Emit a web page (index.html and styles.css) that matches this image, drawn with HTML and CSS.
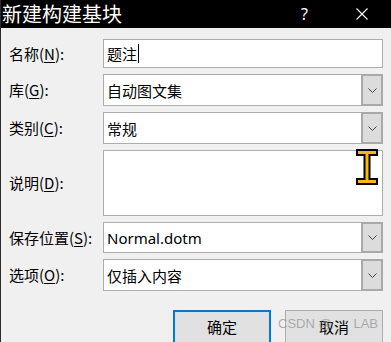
FILE: index.html
```html
<!DOCTYPE html>
<html lang="zh-CN">
<head>
    <meta charset="UTF-8">
    <title>新建构建基块</title>
    <link rel="stylesheet" href="styles.css">
</head>
<body>
    <div class="titlebar">
        <span class="title">新建构建基块</span>
        <span class="help">?</span>
        <svg class="close" width="12" height="12" viewBox="0 0 12 12"><path d="M0.5 0.5L11.5 11.5M11.5 0.5L0.5 11.5" stroke="#fff" stroke-width="1.1"/></svg>
    </div>
    <div class="form">
        <label class="label">名称(<u>N</u>):</label>
        <div class="field">题注<span class="caret"></span></div>

        <label class="label">库(<u>G</u>):</label>
        <div class="field combo"><span class="value">自动图文集</span><span class="drop"><svg width="9" height="5" viewBox="0 0 9 5"><path d="M0.5 0.5L4.5 4.5L8.5 0.5" fill="none" stroke="#444" stroke-width="1"/></svg></span></div>

        <label class="label">类别(<u>C</u>):</label>
        <div class="field combo"><span class="value">常规</span><span class="drop"><svg width="9" height="5" viewBox="0 0 9 5"><path d="M0.5 0.5L4.5 4.5L8.5 0.5" fill="none" stroke="#444" stroke-width="1"/></svg></span></div>

        <label class="label">说明(<u>D</u>):</label>
        <div class="field area"></div>

        <label class="label">保存位置(<u>S</u>):</label>
        <div class="field combo"><span class="value latin">Normal.dotm</span><span class="drop"><svg width="9" height="5" viewBox="0 0 9 5"><path d="M0.5 0.5L4.5 4.5L8.5 0.5" fill="none" stroke="#444" stroke-width="1"/></svg></span></div>

        <label class="label">选项(<u>O</u>):</label>
        <div class="field combo"><span class="value">仅插入内容</span><span class="drop"><svg width="9" height="5" viewBox="0 0 9 5"><path d="M0.5 0.5L4.5 4.5L8.5 0.5" fill="none" stroke="#444" stroke-width="1"/></svg></span></div>
    </div>
    <div class="buttons">
        <button class="btn primary">确定</button>
        <button class="btn">取消</button>
    </div>
    <div class="watermark"><span>CSDN @</span><span>LAB</span></div>
    <svg class="ibeam" width="22" height="36" viewBox="0 0 22 36">
        <path d="M1 1H21V6H13.5V30H21V35H1V30H8.5V6H1Z" fill="#ffb900" stroke="#000" stroke-width="2"/>
    </svg>
</body>
</html>
```

FILE: styles.css
```css
*{
    margin: 0;
    padding: 0;
    box-sizing: border-box;
}
body{
    width: 391px;
    height: 342px;
    overflow: hidden;
    position: relative;
    background-color: #f0f0f0;
    border-left: 1px solid #2b2b2b;
    font-family: "Noto Sans CJK SC", "Noto Sans", sans-serif;
    font-size: 15px;
    color: #000;
}
.titlebar{
    height: 28px;
    background-color: #000;
    color: #fff;
    display: flex;
    align-items: center;
}
.title{
    font-size: 20px;
    line-height: 28px;
    padding-left: 1px;
}
.help{
    margin-left: auto;
    font-family: "Noto Sans", sans-serif;
    font-size: 16px;
    line-height: 28px;
}
.close{
    margin-left: 48px;
    margin-right: 23px;
}
.form{
    display: grid;
    grid-template-columns: 94px 280px;
    grid-template-rows: 29px 32px 32px 66px 31px 32px;
    row-gap: 6px;
    align-items: center;
    padding: 11px 0 0 8px;
}
.label{
    font-size: 15px;
    line-height: 20px;
}
.label u{
    text-underline-offset: 2px;
}
.field{
    height: 100%;
    background-color: #fff;
    border: 1px solid #adadad;
    display: flex;
    align-items: center;
    padding-left: 3px;
    font-size: 15px;
}
.caret{
    width: 1px;
    height: 19px;
    background-color: #000;
    margin-left: 1px;
}
.combo{
    padding-right: 0;
}
.value{
    flex: 1;
}
.latin{
    font-family: "Noto Sans", sans-serif;
    font-size: 15px;
}
.drop{
    width: 22px;
    height: calc(100% + 2px);
    margin-right: -1px;
    background-color: #dcdcdc;
    border: 2px solid #a9a9a9;
    display: flex;
    align-items: center;
    justify-content: center;
}
.buttons{
    display: flex;
    justify-content: flex-end;
    gap: 14px;
    padding: 19px 8px 0 0;
}
.btn{
    width: 98px;
    height: 36px;
    background-color: #e1e1e1;
    border: 1px solid #adadad;
    font-family: "Noto Sans CJK SC", sans-serif;
    font-size: 15px;
    color: #000;
    padding-bottom: 4px;
}
.btn.primary{
    border: 2px solid #0078d7;
}
.watermark{
    position: absolute;
    left: 277px;
    top: 316px;
    width: 100px;
    display: flex;
    justify-content: space-between;
    font-family: "Liberation Sans", sans-serif;
    font-size: 13px;
    color: rgba(150, 150, 150, 0.75);
}
.ibeam{
    position: absolute;
    left: 355px;
    top: 149px;
}
```
